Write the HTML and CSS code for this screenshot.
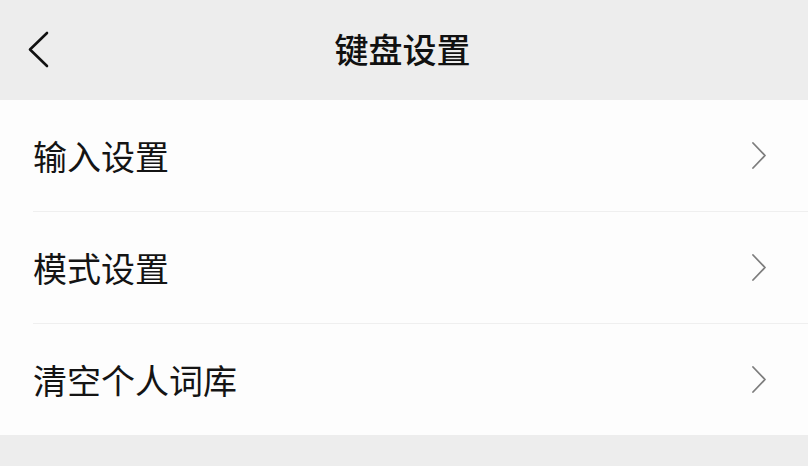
FILE: index.html
```html
<!DOCTYPE html>
<html lang="zh-CN">
<head>
<meta charset="utf-8">
<title>键盘设置</title>
<link rel="stylesheet" href="styles.css">
</head>
<body>
<div class="page">
  <header class="navbar">
    <span class="back">
      <svg width="24" height="40" viewBox="0 0 24 40"><polyline points="19,3 2,19.5 19,36" fill="none" stroke="#111" stroke-width="2.6" stroke-linecap="round" stroke-linejoin="round"/></svg>
    </span>
    <h1 class="title">键盘设置</h1>
    <span class="spacer"></span>
  </header>
  <ul class="list">
    <li class="row"><span class="label">输入设置</span><svg class="chev" width="18" height="30" viewBox="0 0 18 30"><polyline points="3,2 15,14.5 3,27" fill="none" stroke="#7d7d7d" stroke-width="1.8" stroke-linecap="round" stroke-linejoin="round"/></svg></li>
    <li class="row"><span class="label">模式设置</span><svg class="chev" width="18" height="30" viewBox="0 0 18 30"><polyline points="3,2 15,14.5 3,27" fill="none" stroke="#7d7d7d" stroke-width="1.8" stroke-linecap="round" stroke-linejoin="round"/></svg></li>
    <li class="row last"><span class="label">清空个人词库</span><svg class="chev" width="18" height="30" viewBox="0 0 18 30"><polyline points="3,2 15,14.5 3,27" fill="none" stroke="#7d7d7d" stroke-width="1.8" stroke-linecap="round" stroke-linejoin="round"/></svg></li>
  </ul>
</div>
</body>
</html>
```
FILE: styles.css
```css
* { box-sizing: border-box; }
html, body {
  margin: 0;
  padding: 0;
  background: #ededed;
  font-family: "Noto Sans CJK SC", "Noto Sans", sans-serif;
}
.page {
  width: 808px;
  height: 466px;
  background: #ededed;
}
.navbar {
  height: 100px;
  display: grid;
  grid-template-columns: 1fr auto 1fr;
  align-items: center;
  padding: 0 3px 0 0;
}
.back {
  display: flex;
  align-items: center;
  padding-left: 28px;
}
.title {
  margin: 0;
  font-size: 34px;
  font-weight: 500;
  color: #111;
  line-height: 1;
  padding-bottom: 2px;
}
.list {
  list-style: none;
  margin: 0;
  padding: 0 0 0 33px;
  background: #fdfdfd;
}
.row {
  height: 112px;
  display: flex;
  align-items: center;
  justify-content: space-between;
  padding-right: 40px;
  border-bottom: 1px solid #efefef;
}
.row.last {
  border-bottom: none;
  height: 111px;
}
.label {
  font-size: 34px;
  color: #141414;
  line-height: 1;
}
.chev {
  display: block;
}
```
